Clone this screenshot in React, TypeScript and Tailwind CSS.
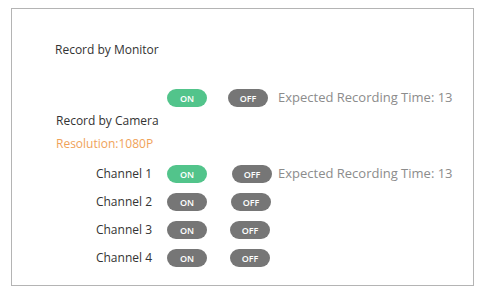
import React from "react";

// ─── Pills ───────────────────────────────────────────────────────────

function Pill({ label, on }: { label: string; on?: boolean }) {
  return (
    <span
      className={`flex h-[18px] w-[40px] items-center justify-center rounded-full text-[9px] font-semibold leading-none text-white ${
        on ? "bg-[#52c48b]" : "bg-[#767676]"
      }`}
    >
      {label}
    </span>
  );
}

const CHANNELS = [
  { name: "Channel 1", on: true, off: 232, time: true },
  { name: "Channel 2", on: false, off: 231, time: false },
  { name: "Channel 3", on: false, off: 230, time: false },
  { name: "Channel 4", on: false, off: 230, time: false },
];

// ─── Component ───────────────────────────────────────────────────────

export default function App() {
  return (
    <div
      className="h-[293px] w-[482px] bg-white pl-[11px] pt-[8px]"
      style={{ fontFamily: '"Open Sans", "Noto Sans", sans-serif' }}
    >
      <div className="flex h-[278px] w-[463px] flex-col border border-[#b4b4b4] pl-[43px] text-[12px] text-[#333]">
        <div className="mt-[33px] h-[16px] leading-[16px]">Record by Monitor</div>

        {/* Monitor toggles */}
        <div className="mt-[31px] flex h-[18px] items-center pl-[112px]">
          <Pill label="ON" on />
          <span className="ml-[21px]">
            <Pill label="OFF" />
          </span>
          <span className="ml-[10px] text-[13px] text-[#8c8c8c]">Expected Recording Time: 13</span>
        </div>

        <div className="mt-[6px] h-[16px] pl-[1px] leading-[16px]">Record by Camera</div>
        <div className="mt-[7px] h-[16px] pl-[1px] leading-[16px] text-[#f0a259]">Resolution:1080P</div>

        {/* Channels */}
        <div className="mt-[13px] flex flex-col gap-[10px]">
          {CHANNELS.map((c) => (
            <div key={c.name} className="flex h-[18px] items-center">
              <span className="w-[112px] pr-[15px] text-right">{c.name}</span>
              <Pill label="ON" on={c.on} />
              <span style={{ marginLeft: c.off - 207 }}>
                <Pill label="OFF" />
              </span>
              {c.time && (
                <span className="ml-[6px] text-[13px] text-[#8c8c8c]">Expected Recording Time: 13</span>
              )}
            </div>
          ))}
        </div>
      </div>
    </div>
  );
}
